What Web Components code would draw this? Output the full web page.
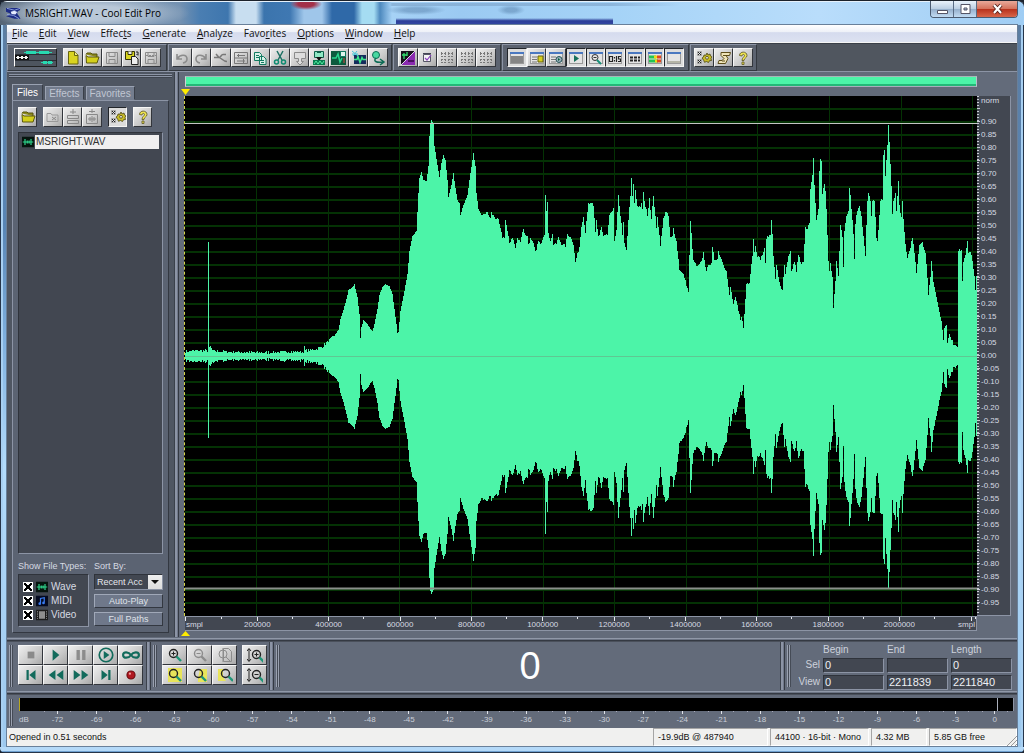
<!DOCTYPE html>
<html lang="en">
<head>
<meta charset="utf-8">
<title>MSRIGHT.WAV - Cool Edit Pro</title>
<style>
  html, body { height: 100%; margin: 0; }
  body {
    --panel: #636b7a; --dark: #4f5662; --well: #424751; --lite: #8c94a5; --edge: #343942;
    --wave: #4cf4a8; --ink: #d6dae2;
    font: 9px/12px "Liberation Sans", Arial, sans-serif; color: var(--ink); background: #1c2430;
  }
</style>
</head>
<body>
<app-window>
  <title-bar slot="title">MSRIGHT.WAV - Cool Edit Pro</title-bar>
  <menu-bar slot="menu"></menu-bar>
  <main-toolbar slot="toolbar"></main-toolbar>
  <file-panel slot="side"></file-panel>
  <wave-view slot="main"></wave-view>
  <transport-row slot="transport"></transport-row>
  <level-meter slot="levels"></level-meter>
  <status-bar slot="status">
    <span>Opened in 0.51 seconds</span>
    <span>-19.9dB @ 487940</span>
    <span>44100 · 16-bit · Mono</span>
    <span>4.32 MB</span>
    <span>5.85 GB free</span>
  </status-bar>
</app-window>

<script>
const define = (name, html, init) => customElements.define(name, class extends HTMLElement {
  connectedCallback() {
    if (this.shadowRoot) return;
    const root = this.attachShadow({ mode: 'open' });
    root.innerHTML = typeof html === 'function' ? html(this) : html;
    if (init) init(root, this);
  }
});

/* ---------- icon library, drawn on a 16 x 16 grid ---------- */
const mag = (c, h) => `<circle cx="6.5" cy="6.5" r="4" fill="none" stroke="${c}" stroke-width="1.4"/><path d="M9.500 9.500l4.500 4.500" stroke="${h}" stroke-width="2.400"/>`;
const boxes = (c) => `<g fill="none" stroke="${c}"><path d="M2 3.500h5M9 3.500h5M2 6.500h5M9 6.500h5M2 9.500h5M9 9.500h5M2 12.500h5M9 12.500h5" stroke-dasharray="2 1"/><path d="M2.500 2v4M6.500 2v4M9.500 2v4M13.500 2v4M2.500 10v4M6.500 10v4M9.500 10v4M13.500 10v4" stroke-dasharray="1 1"/></g>`;
const win = (inner) => `<rect x="1.500" y="2.500" width="13" height="11" fill="#e4e4e4" stroke="#999"/><path d="M1 2h14v2H1z" fill="#4a78c0"/>${inner}`;
const gear = `<path d="M2 2l3 3m0-3L2 5M2 10l3 3m0-3l-3 3" stroke="#222" stroke-width="1"/><path d="M1.500 1.500h4v4h-4zM1.500 9.500h4v4h-4z" fill="none" stroke="#777" stroke-width=".5"/><path d="M11 3l1 2 2-1 .5 2 1.500 1-1 1.500.5 2-2 .2-1 1.800-2-1-2 .8-.8-2L6 8l1.500-1L8 5l2 .2z" fill="#c8bc28" stroke="#4b4510" stroke-width=".8"/><circle cx="11" cy="7.800" r="1.400" fill="#eee" stroke="#4b4510" stroke-width=".8"/>`;
const folder = `<path d="M2 4.500l1-1.500h4l1 1h5v3" fill="#8d8a1c" stroke="#56530c"/><path d="M4 7h11l-2 6H2.500L2 5.500z" fill="#d3cf1c" stroke="#5c590c"/>`;
const floppy = (c) => `<path d="M2.500 2.500h11v11h-11zM5 2.500v4h6v-4M5 13.500v-4h6v4" fill="none" stroke="${c}"/>`;
const ICONS = {
  logo: `<path d="M0 2h15v2.500c-3 .5-4 3-2 5l2.500 4H9L0 11c3-.5 4-1.500 4.500-3L0 6z" fill="#1d2c86"/><path d="M1 2.500l8 2 6-2M1 9l7 1 6 3.500" stroke="#8fa2e0" fill="none"/><path d="M5 6l4-1 3 1.500L10 9 6 8.500z" fill="#e6ecff"/>`,
  fresh: `<path d="M3.500 1.500h6l3.500 3.500v9h-9.500z" fill="#d9d420" stroke="#67640f"/><path d="M9.500 1.500v4H13" fill="#f2f08a" stroke="#67640f"/>`,
  open: folder,
  save: floppy('#8a8a8a'),
  saveas: `<path d="M1.500 1.500h9v8h-9z" fill="#d8d420" stroke="#33320a"/><path d="M4 1.500v3h4v-3" fill="#eee" stroke="#33320a"/><path d="M7.500 6.500h4l2.500 2.500v5.500h-6.500z" fill="#eee" stroke="#222"/><path d="M12 2h2v3m-1.500-1L14 5.500" stroke="#222" fill="none"/>`,
  savesel: floppy('#8a8a8a') + `<path d="M3 5.500h10" stroke="#8a8a8a" stroke-dasharray="2 1"/>`,
  undo: `<path d="M3 4v5h5M3.500 8.500C6 4 13 4 13 9c0 2-1.500 3.500-4 4" fill="none" stroke="#8c8c8c" stroke-width="1.600"/>`,
  redo: `<path d="M13 4v5H8M12.500 8.500C10 4 3 4 3 9c0 2 1.500 3.500 4 4" fill="none" stroke="#8c8c8c" stroke-width="1.600"/>`,
  trim: `<path d="M1 7.500h5c2 0 2-3 4-3h3M6 7.500c2 0 4 4 8 4M3 4l3 3.500" fill="none" stroke="#777" stroke-width="1.500"/>`,
  grid: `<path d="M1.500 2.500h13v11h-13zM1.500 8h13M4 5.500h8M4 11h8" fill="none" stroke="#777"/><path d="M5.500 4v3M10.500 9v4" stroke="#777"/>`,
  copy: `<path d="M2.500 2.500h5l2 2v6h-7zM7.500 6.500h4l2.500 2.500v5.500H7.500z" fill="#d8f0e8" stroke="#117a60"/><path d="M4 5.500h3M4 7.500h3M9 10.500h3M9 12.500h3" stroke="#117a60"/>`,
  cut: `<path d="M5 1l5 9M11 1l-5 9" stroke="#1d6f62" stroke-width="1.500"/><g fill="none" stroke="#0d8a70" stroke-width="1.500"><circle cx="4.500" cy="12" r="2"/><circle cx="11.500" cy="12" r="2"/></g>`,
  paste: `<path d="M2.500 2.500h11v6h-4v3h2l-3.500 3.500-3.500-3.500h2v-3h-4z" fill="#ddd" stroke="#8a8a8a"/>`,
  pastewave: `<path d="M3.500 1.500h9v6h-9z" fill="#8fe8c4" stroke="#0e5f4a"/><path d="M6 1h4v2H6z" fill="#0e5f4a"/><path d="M5 7h6l-3 4z" fill="#111"/><path d="M2 10h12v5H2z" fill="#0a7a50"/><path d="M3 14l2-3 2 3 2-3 2 3 2-3" stroke="#50f0a0" fill="none"/>`,
  mixpaste: `<path d="M0 1h15v14H0z" fill="#0c5a3e"/><path d="M1 8h4l2-4 2 8 2-4" stroke="#26d48c" fill="none" stroke-width="1.500"/><path d="M9.500 1.500h5v5h-5z" fill="#dff5ec" stroke="#117a60"/><path d="M13 8v5" stroke="#d04040"/>`,
  newwave: `<path d="M3 5h12v9H3z" fill="#142c5c"/><path d="M3 9.500h3l1-3 2 6 2-5 1 2h3" stroke="#3ce88a" fill="none" stroke-width="1.500"/><path d="M1 1l6 5M6 1L2 6M1 4h6" stroke="#48c8d8"/>`,
  convert: `<circle cx="6" cy="5" r="3.500" fill="#48d8a0" stroke="#0c6b55"/><path d="M6 8c-3 3 0 5 7 4M10 9l4 3-4 3" fill="none" stroke="#0c6b55" stroke-width="1.500"/>`,
  spectral: `<path d="M1 1h14v14H1z" fill="#16101c"/><path d="M1 15L15 1v14z" fill="#8a2ab0"/><path d="M2 5h5M4 3v6M7 2v4" stroke="#33e070" stroke-width="1.300"/><path d="M1 15L15 1" stroke="#d8d8e8"/><path d="M8 11h6" stroke="#4a1060" stroke-width="2"/>`,
  check: `<path d="M4.500 4.500h7v7h-7z" fill="#f4f4f4" stroke="#556"/><path d="M6 8l2 2 4-5" fill="none" stroke="#8c40c0" stroke-width="1.200"/><path d="M4 3.500h8" stroke="#445"/>`,
  boxes: boxes('#777'),
  w1: win(`<path d="M2 6h12v7H2z" fill="#858585"/>`),
  w2: win(`<path d="M3 7h5M3 9.500h5M3 12h5" stroke="#777"/><path d="M9 6h5v6H9z" fill="#d6d020" stroke="#66600c"/>`),
  w3: win(`<path d="M3 7h5M3 9.500h5M3 12h5" stroke="#777"/><circle cx="11" cy="9.500" r="3" fill="#9ab" stroke="#255"/><path d="M10 8l2 1.500-2 1.500z" fill="#063"/>`),
  w4: win(`<path d="M6 5v7l5-3.500z" fill="#17705a"/>`),
  w5: win(`<circle cx="7" cy="7.500" r="3" fill="none" stroke="#333"/><path d="M9 10l4 4" stroke="#17907a" stroke-width="2"/><path d="M5.500 7.500h3" stroke="#333"/>`),
  w6: win(`<path d="M2.500 6.500h3v5h-3zM7.500 7v1.500M7.500 10v1.500M9.500 6v6M14 6.500h-2.500v2.500h2v2.500h-2.500" fill="none" stroke="#222" stroke-width="1.200"/>`),
  w7: win(`<path d="M3 7.500h10M3 10.500h10" stroke="#222" stroke-width="2" stroke-dasharray="3 1"/>`),
  w8: win(`<path d="M2 5.500h7v3H2zM2 9.500h9v3H2z" fill="#23c552"/><path d="M7 5.500h3v3H7zM8 9.500h2v3H8z" fill="#f1d714"/><path d="M10 5.500h4v3h-4zM10 9.500h4v3h-4z" fill="#e2471c"/>`),
  w9: win(`<path d="M2 11h12v2H2z" fill="#b5b5a8"/>`),
  gear,
  script: `<path d="M5 2.500h9.500l-1 3H10l2 3-2.500 5H2l1-3h3l2-2-3-3z" fill="#efe4b8" stroke="#5c4c18"/><path d="M7 5.500h4M6 11h3" stroke="#5c4c18"/>`,
  help: `<path d="M4.500 5.500C4.500 1 12 1 12 5.500 12 8 9 8 9 10.500H7C7 7.500 9.500 7 9.500 5.500S7 4 7 6zM7 12h2v2.500H7z" fill="#f0e650" stroke="#66602a" stroke-width=".9"/>`,
  closef: `<path d="M2 12.500v-8h4l1 1.500h6v6.500z" fill="none" stroke="#999"/><path d="M7 8l4 3m0-3l-4 3" stroke="#888"/>`,
  insmt: `<path d="M8 0v5M5 3h6M2.500 6.500h11v3h-11zM2.500 11.500h11v3h-11z" fill="none" stroke="#888"/>`,
  inscd: `<path d="M8 0v4M5 2.500h6M2.500 5.500h11v9h-11zM4 10h8M6 8v4M8 7v6M10 8v4" fill="none" stroke="#888"/>`,
  stop: `<path d="M5 5h6v6H5z" fill="#8a8a8a"/>`,
  play: `<path d="M5 3v10l6-5z" fill="#126b5c"/>`,
  pause: `<path d="M4 3.500h3v9H4zM9 3.500h3v9H9z" fill="#8c8c8c"/>`,
  playto: `<circle cx="8" cy="8" r="6" fill="none" stroke="#126b5c" stroke-width="1.500"/><path d="M6 4.500v7l5-3.500z" fill="#126b5c"/>`,
  loop: `<path d="M8 8C6 5 1 4.500 1 8s5 3 7 0 7-3.500 7 0-5 3-7 0z" fill="none" stroke="#126b5c" stroke-width="2"/>`,
  first: `<path d="M4 3.500h2v9H4zM12 3.500v9L6.500 8z" fill="#126b5c"/>`,
  rew: `<path d="M7.500 3.500v9L1.500 8zM14.500 3.500v9L8.500 8z" fill="#126b5c"/>`,
  fwd: `<path d="M1.500 3.500v9l6-4.500zM8.500 3.500v9l6-4.500z" fill="#126b5c"/>`,
  last: `<path d="M10 3.500h2v9h-2zM4 3.500v9L9.500 8z" fill="#126b5c"/>`,
  rec: `<circle cx="8" cy="8" r="3.600" fill="#b01820" stroke="#6b0c10"/><circle cx="7" cy="6.800" r="1" fill="#f0a0a0"/>`,
  zin: mag('#222', '#1d9678') + `<path d="M4.500 6.500h4m-2-2v4" stroke="#222"/>`,
  zout: mag('#8c8c8c', '#8c8c8c') + `<path d="M4.500 6.500h4" stroke="#8c8c8c"/>`,
  zfull: `<path d="M6.500 1.500h5l3 3v10h-8z" fill="none" stroke="#8c8c8c"/><circle cx="6" cy="7" r="4" fill="none" stroke="#8c8c8c"/><path d="M6 1v14M9 10l4 4" stroke="#8c8c8c"/>`,
  zsel: `<path d="M1 1h14v14H1z" fill="#e8e45a"/>` + mag('#222', '#1d9678'),
  zleft: `<path d="M8 2h7v13H6v-4z" fill="#e8e45a"/>` + mag('#222', '#1d9678'),
  zright: `<path d="M1 2h5v8l3 4H1z" fill="#e8e45a"/><g transform="translate(2)">` + mag('#222', '#1d9678') + '</g>',
  vin: `<path d="M2 2v12M0 4l2-2.500L4 4M0 12l2 2.500L4 12" fill="none" stroke="#222"/><g transform="translate(3 1)">` + mag('#222', '#1d9678') + `<path d="M4.500 6.500h4m-2-2v4" stroke="#222"/></g>`,
  vout: `<path d="M2 2v12M0 4l2-2.500L4 4M0 12l2 2.500L4 12" fill="none" stroke="#222"/><g transform="translate(3 1)">` + mag('#222', '#1d9678') + `<path d="M4.500 6.500h4" stroke="#222"/></g>`,
  wavefile: `<path d="M0 1h16v14H0z" fill="#06140e"/><path d="M1 8h14M4 4v8M7 6v4M9.500 6v4M12 4v8" stroke="#2fd48c" stroke-width="1.600"/>`,
  midifile: `<path d="M0 1h16v14H0z" fill="#050a20"/><path d="M6 11V4.500l5-1V10" fill="none" stroke="#3a7cf0" stroke-width="1.600"/><circle cx="5" cy="11.500" r="1.800" fill="#3a7cf0"/><circle cx="10" cy="10.500" r="1.800" fill="#3a7cf0"/>`,
  videofile: `<path d="M0 1h16v14H0z" fill="#1c1c1c"/><path d="M4 3h8v10H4z" fill="#8e8e8e"/><path d="M2 3v10M14 3v10" stroke="#bbb" stroke-dasharray="1.500 1.500"/>`
};
const icon = (n, s = 16) => `<svg viewBox="0 0 16 16" width="${s}" height="${s}" aria-hidden="true">${ICONS[n] || ''}</svg>`;

/* ---------- shared controls ---------- */
define('tool-button', (el) => `
  <style>
    :host { display: flex; flex: 1 1 0; min-width: 0; }
    button { flex: 1; min-width: 0; padding: 0; margin: 0; display: grid; place-items: center; border: 1px solid; overflow: hidden;
      border-color: #f6f6f6 #33363c #33363c #f6f6f6; background: linear-gradient(135deg, #eee, #c9c9c9 60%, #a9a9a9); }
    :host([down]) button { border-color: #22252a #f4f4f4 #f4f4f4 #22252a; background: #dcdcdc; }
    svg { display: block; }
  </style>
  <button type="button" aria-label="${el.getAttribute('label') || el.getAttribute('icon')}">${icon(el.getAttribute('icon'), el.getAttribute('size') || 16)}</button>`);
const tb = (names, down = '', size = 16) => names.split(' ').map((n, i) => `<tool-button icon="${n}" size="${size}" ${down[i] === '1' ? 'down' : ''}></tool-button>`).join('');

define('grip-bar', `
  <style>:host { display: block; flex: none; width: 4px; margin: 2px 0;
    background: linear-gradient(90deg, #9aa1b0 1px, #454b56 1px 2px, #9aa1b0 2px 3px, #454b56 3px); }</style>`);
define('split-bar', `
  <style>:host { display: block; flex: none; width: 5px;
    background: linear-gradient(90deg, #3b414b 1px, #8c94a5 1px 3px, #70788a 3px 4px, #343942 4px); }</style>`);

/* ---------- window ---------- */
define('app-window', `
  <style>
    :host { display: flex; flex-direction: column; box-sizing: border-box; min-height: 100vh; padding: 0 7px 7px;
      border-radius: 7px 7px 5px 5px;
      background: linear-gradient(#3b414a 2px, transparent 2px),
        linear-gradient(0deg, #26354a 1px, #6fa0d0 1px 2px, #b4d9f8 2px 6px, transparent 6px),
        linear-gradient(90deg, #26354a 1px, #a8d0f2 1px 3px, transparent 3px calc(100% - 3px), #a8d0f2 calc(100% - 3px) calc(100% - 1px), #26354a calc(100% - 1px)),
        linear-gradient(#5c7ca0, #5885b5 30%, #7fb0df 45%, #b2dbfb 62%, #9cc8ee); }
    .client { flex: 1; display: flex; flex-direction: column; background: var(--dark); outline: 1px solid #69809a; }
    .mid { flex: 1; display: flex; min-height: 0; border-top: 1px solid var(--lite); background: var(--panel); }
    .rule { height: 5px; background: linear-gradient(var(--panel) 1px, #9098a8 1px 2px, #6c7484 2px 3px, #343942 3px 4px, #4a505b 4px); }
    ::slotted([slot=side]) { flex: none; width: 167px; }
    ::slotted([slot=main]) { flex: 1; min-width: 0; }
  </style>
  <slot name="title"></slot>
  <div class="client">
    <slot name="menu"></slot><slot name="toolbar"></slot>
    <div class="mid"><slot name="side"></slot><split-bar></split-bar><slot name="main"></slot></div>
    <div class="rule"></div>
    <slot name="transport"></slot>
    <div class="rule"></div>
    <slot name="levels"></slot><slot name="status"></slot>
  </div>`);

define('title-bar', `
  <style>
    :host { display: flex; height: 25px; margin: 0 -7px; padding: 0 6px 0 6px; align-items: center; gap: 4px; box-sizing: border-box;
      border-radius: 7px 7px 0 0; overflow: hidden; border-top: 1px solid #1c222b; color: #000;
      font: 10px/16px "Open Sans", "Noto Sans", sans-serif;
      background:
        linear-gradient(#e6f1fb 1px, transparent 1px),
        linear-gradient(#2c3e9800, #2c3e98 40%, #3448a4) 396px 17px / 217px 7px no-repeat,
        radial-gradient(ellipse 100px 18px at 90px 12px, #b9c8d8 40%, #b9c8d800),
        radial-gradient(ellipse 30px 5px at 416px 9px, #5c86b088 40%, #5c86b000),
        radial-gradient(ellipse 14px 5px at 511px 9px, #5c86b088 40%, #5c86b000),
        linear-gradient(90deg, #7fa6cc00 390px, #7fa6ccaa 392px 610px, #7fa6cc00 680px) 0 2px / 100% 3px no-repeat,
        radial-gradient(ellipse 16px 6px at 306px 3px, #a33049 50%, #a3304900),
        linear-gradient(90deg, #556475, #7e93ab 60px, #7391b1 180px, #4a7eb2 200px, #3e76ae 228px, #c8def0 236px 256px, #3b74ad 264px, #3f78b2 290px, #9fc6ea 304px 322px, #2f69a8 332px, #2f69a8 354px, #a5dcf2 362px 374px, #4d89be 380px, #a6d2f6 392px, #9bcaf2 45%, #a5d3f7 60%, #b9ddfb 80%, #9fcdf4); }
    .t { flex: 1; }
    .b { display: flex; align-self: flex-start; height: 16px; border: 1px solid #4a5a70; border-top: 0; border-radius: 0 0 4px 4px; overflow: hidden; }
    button { width: 23px; padding: 0; border: 0; border-right: 1px solid #5a6c84; display: grid; place-items: center;
      background: linear-gradient(#e9f2fb, #b9cde2 50%, #94aecb 50%, #c2dbf2); }
    button:last-child { width: 40px; border-right: 0; background: linear-gradient(#e9a99a, #d4705a 50%, #b7301b 50%, #d8664a); }
  </style>
  ${icon('logo', 15)}
  <span class="t"><slot></slot></span>
  <div class="b">
    <button type="button" aria-label="Minimize"><svg width="13" height="12"><path d="M1.500 7.500h10v3h-10z" fill="#fff" stroke="#556"/></svg></button>
    <button type="button" aria-label="Maximize"><svg width="13" height="12"><path d="M2 1.500h9v9H2zM5 5h3v2H5z" fill="#fff" fill-rule="evenodd" stroke="#556"/></svg></button>
    <button type="button" aria-label="Close"><svg width="13" height="12"><path d="M3 2l7 8M10 2l-7 8" stroke="#57221c" stroke-width="4"/><path d="M3 2l7 8M10 2l-7 8" stroke="#fff" stroke-width="2.200"/></svg></button>
  </div>`);

define('menu-bar', () => `
  <style>
    :host { display: block; color: #111; background: linear-gradient(#fff, #eef1f8 40%, #d5dbee 45%, #dde2f1); border-bottom: 1px solid #f5f5f5; }
    nav { display: flex; gap: 11px; height: 17px; padding-left: 5px; }
    button { all: unset; font: 10px/17px "Open Sans", "Noto Sans", sans-serif; }
  </style>
  <nav>${['_File', '_Edit', '_View', 'Effec_ts', '_Generate', '_Analyze', 'Favo_rites', '_Options', '_Window', '_Help']
    .map(s => `<button type="button">${s.replace(/_(.)/, '<u>$1</u>')}</button>`).join('')}</nav>`);

define('main-toolbar', () => `
  <style>
    :host { display: flex; height: 27px; background: #50565f; border-top: 1px solid #3a3f48; }
    .g { box-sizing: border-box; display: flex; padding: 3px; border: 1px solid; border-color: var(--lite) #33383f #33383f var(--lite); background: #5c6370; margin-right: 1px; }
    .logo { width: 43px; margin: 0 6px 0 3px; box-sizing: border-box; border: 1px solid; border-color: #fff #222 #222 #fff; background: #4e555f; padding: 0; display: block; }
    .logo svg { display: block; }
    .five { display: flex; width: 98px; }
    .a { width: 160px; } .b { width: 224px; } .c { width: 108px; padding-left: 4px; padding-right: 4px; } .d { width: 187px; padding-left: 4px; padding-right: 4px; } .e { width: 67px; }
  </style>
  <div class="g a">
    <button type="button" class="logo" aria-label="Multitrack view"><svg width="41" height="17"><path d="M0 5.500h41M0 11.500h41" stroke="#2a2e35"/><path d="M9 3.500h28" stroke="#28d8b0"/><path d="M11 3.500h10M24 3.500h10" stroke="#28d8b0" stroke-width="3"/><path d="M0 8.500h14" stroke="#111" stroke-width="5"/><path d="M1 8.500h12" stroke="#f4f4f4"/><path d="M2 8.500h11" stroke="#f4f4f4" stroke-width="3" stroke-dasharray="2 2"/><path d="M26 13.500h12" stroke="#28d8b0"/><path d="M28 13.500h9" stroke="#28d8b0" stroke-width="3" stroke-dasharray="4 1"/></svg></button>
    <div class="five">${tb('fresh open save saveas savesel')}</div>
  </div>
  <div class="g b">${tb('undo redo trim grid copy cut paste pastewave mixpaste newwave convert')}</div>
  <div class="g c">${tb('spectral check boxes boxes boxes')}</div>
  <div class="g d">${tb('w1 w2 w3 w4 w5 w6 w7 w8 w9', '100111111')}</div>
  <div class="g e">${tb('gear script help')}</div>`);

/* ---------- organizer panel ---------- */
define('file-panel', () => `
  <style>
    :host { display: flex; flex-direction: column; box-sizing: border-box; padding: 2px 5px 4px 5px; background: var(--dark); }
    .grip { height: 4px; margin: 0 -3px 6px; background: linear-gradient(#8c94a5 1px, #3f454f 1px 2px, #8c94a5 2px 3px, #3f454f 3px); }
    .tabs { display: flex; gap: 2px; align-items: flex-end; height: 16px; }
    .tabs button { margin: 0; padding: 0 3px; height: 14px; font: 10px/13px "Liberation Sans", sans-serif; color: #c0c6d2; background: #747d8e; border: 1px solid; border-color: #9aa2b2 #3a3f48 transparent #9aa2b2; white-space: nowrap; }
    .tabs button[aria-selected=true] { height: 17px; padding: 0 4px; color: #fff; background: #5b6372; margin-bottom: -1px; }
    .page { flex: 1; display: flex; flex-direction: column; padding: 6px 5px 5px; border: 1px solid; border-color: var(--lite) #333841 #333841 var(--lite); background: #5b6372; min-height: 0; }
    .bar { display: flex; height: 20px; gap: 6px; margin-bottom: 5px; }
    .bar div { display: flex; width: 19px; } .bar .w { width: 59px; }
    .list { flex: 1; margin: 0; padding: 2px 3px; list-style: none; background: var(--well); border: 1px solid; border-color: #2f333b var(--lite) var(--lite) #2f333b; }
    .list li { display: flex; align-items: center; gap: 1px; font-size: 10px; }
    .list span { flex: 1; background: #f0eff0; color: #333; line-height: 14px; padding-left: 1px; }
    .opts { display: flex; gap: 5px; margin-top: 6px; }
    .types { width: 71px; } .sort { flex: 1; display: flex; flex-direction: column; gap: 4px; }
    .cap { white-space: nowrap; height: 14px; line-height: 12px; font-size: 9px; }
    .box { box-sizing: border-box; height: 53px; padding: 0 4px; background: var(--well); border: 1px solid; border-color: #2f333b var(--lite) var(--lite) #2f333b; display: flex; flex-direction: column; justify-content: center; gap: 1px; }
    .box label { display: flex; align-items: center; gap: 3px; font-size: 10px; height: 13px; }
    input { appearance: none; width: 10px; height: 10px; margin: 0; background: linear-gradient(45deg, transparent 43%, #000 43% 57%, transparent 57%), linear-gradient(-45deg, transparent 43%, #000 43% 57%, transparent 57%), #fff; border: 1px solid #fff; box-sizing: border-box; }
    .sort .cap { margin-bottom: -4px; }
    .sel { display: flex; height: 16px; box-sizing: border-box; border: 1px solid; border-color: #2f333b var(--lite) var(--lite) #2f333b; background: var(--well); }
    select { appearance: none; flex: 1; min-width: 0; margin: 0; padding: 0 14px 0 2px; border: 0; border-radius: 0; color: #e6e9ee; font: 9px/14px "Liberation Sans", sans-serif; text-overflow: clip;
      background: linear-gradient(#eee, #ddd) right / 14px 14px no-repeat, var(--well); }
    .arrow { width: 8px; height: 4px; margin: 5px 3px 0 -11px; background: #111; clip-path: polygon(0 0, 100% 0, 50% 100%); z-index: 1; pointer-events: none; }
    .sort > button { height: 14px; margin: 0; padding: 0; font: 9px/12px "Liberation Sans", sans-serif; color: #dfe2e8; background: #6f788a; border: 1px solid; border-color: #a0a8b8 #333841 #333841 #a0a8b8; }
  </style>
  <div class="grip"></div>
  <div class="tabs" role="tablist"><button role="tab" aria-selected="true">Files</button><button role="tab">Effects</button><button role="tab">Favorites</button></div>
  <div class="page">
    <div class="bar"><div>${tb('open')}</div><div class="w">${tb('closef insmt inscd')}</div><div>${tb('gear', '1')}</div><div>${tb('help')}</div></div>
    <ul class="list"><li>${icon('wavefile', 12)}<span>MSRIGHT.WAV</span></li></ul>
    <div class="opts">
      <div class="types"><div class="cap">Show File Types:</div>
        <div class="box">
          <label><input type="checkbox" checked>${icon('wavefile', 12)}Wave</label>
          <label><input type="checkbox" checked>${icon('midifile', 12)}MIDI</label>
          <label><input type="checkbox" checked>${icon('videofile', 12)}Video</label>
        </div></div>
      <div class="sort"><label class="cap" for="s">Sort By:</label>
        <div class="sel"><select id="s"><option>Recent Acc</option></select><i class="arrow"></i></div>
        <button type="button">Auto-Play</button><button type="button">Full Paths</button></div>
    </div>
  </div>`);

/* ---------- waveform ---------- */
/* Peak envelope: sample column, amplitude (259 = full scale). */
const ENV = `0 4 8 5 22 5 25 9 27 5 40 4 75 3 100 4 118 4 119 8 120 5 128 6 137 9 142 14 148 19 153 26 155 37 158 46 161 57 163 66 167 69 169 72 170 67 172 59 174 42 175 18 176 29 178 36 182 32 185 27 187 25 189 32 192 47 194 61 197 69 200 72 204 70 207 62 209 47 211 32 212 23 213 24 215 45 218 60 222 82 224 105 227 120 231 125 233 162 234 177 236 183 238 175 241 174 243 189 244 219 245 232 246 235 248 231 249 209 252 190 254 178 256 192 258 200 260 195 262 175 263 158 266 170 268 182 270 167 272 155 274 152 275 140 278 150 282 160 284 175 287 195 288 202 290 189 291 162 293 146 297 139 301 143 305 137 306 142 308 139 313 135 317 119 319 119 320 135 322 124 324 113 327 119 330 108 332 117 335 115 338 128 339 122 342 120 343 112 345 117 348 112 350 104 353 115 355 111 358 120 359 122 360 161 361 145 362 153 363 122 365 116 367 121 368 112 371 112 373 118 376 112 380 110 382 122 386 118 388 112 390 94 392 102 394 109 396 130 398 138 400 124 402 142 403 151 407 151 408 149 410 124 411 135 413 120 414 121 416 129 418 119 422 121 424 139 428 147 429 114 431 125 433 159 435 140 437 122 438 132 439 112 441 105 443 135 445 159 446 176 447 160 448 170 449 152 450 165 452 149 455 147 456 152 457 145 458 162 460 149 462 140 464 157 466 135 468 160 471 127 472 139 475 111 478 136 480 144 483 139 485 118 487 119 488 128 491 115 494 87 499 79 503 64 504 100 505 134 506 122 508 95 512 89 516 94 518 103 521 84 523 92 526 92 527 108 529 97 532 97 533 105 536 97 541 85 544 60 545 69 548 52 550 58 552 50 553 45 555 37 556 40 558 28 559 42 561 72 564 74 566 92 567 100 568 118 569 104 570 111 572 100 575 97 578 104 579 107 580 92 581 118 584 121 585 121 586 136 587 123 588 99 590 78 591 90 594 74 597 65 599 90 600 82 603 99 605 104 606 84 609 95 611 85 613 101 616 91 618 95 620 130 622 127 624 132 625 165 627 179 628 198 629 170 631 135 633 145 634 184 635 196 636 194 637 162 639 170 640 165 641 147 643 95 644 84 645 93 647 79 648 48 650 75 651 96 653 81 654 105 655 130 657 119 658 89 659 125 661 140 663 145 664 167 665 160 666 147 668 122 669 97 670 132 672 145 674 150 676 139 678 120 680 99 681 129 682 154 683 161 685 155 686 139 687 153 689 154 691 119 692 114 693 127 695 155 697 154 698 199 699 205 700 180 702 209 703 231 704 212 706 169 707 140 708 155 710 161 711 144 713 173 714 149 716 137 717 153 718 135 720 112 722 98 724 105 727 118 729 104 731 82 734 112 737 114 740 102 742 79 743 62 745 79 746 96 748 75 750 64 753 49 756 34 758 16 759 27 761 31 762 13 764 23 766 17 768 12 772 10 773 106 776 106 777 74 778 95 780 100 782 114 783 104 785 105 787 95 789 80 790 65 791 79 792 79`.split(' ').map(Number);

function wavePath() {
  let seed = 7;
  const rnd = () => (seed = (seed * 16807) % 2147483647) / 2147483647;
  let top = 'M0 259', bottom = '';
  for (let x = 0, i = 0; x < 792; x++) {
    while (i < ENV.length - 4 && ENV[i + 2] <= x) i += 2;
    const t = (x - ENV[i]) / (ENV[i + 2] - ENV[i]);
    const a = ENV[i] === x ? ENV[i + 1] : ENV[i + 1] + (ENV[i + 3] - ENV[i + 1]) * Math.min(1, t);
    const j = x < 150 ? (rnd() - 0.4) * 3 : x < 296 ? 0 : (rnd() - 0.5) * 3;
    const up = Math.round(259 - a - j), dn = Math.round(259 + a * 1.01 + j);
    top += `V${up}H${x + 1}`;
    bottom = `V${dn}H${x}` + bottom;
  }
  return top + bottom + 'Z';
}

define('wave-view', () => {
  const rows = [];
  for (let v = 95; v >= -95; v -= 5) rows.push(`<span>${v === 95 ? '' : (v / 100).toFixed(2)}</span>`);
  let grid = '';
  for (let i = 1; i < 40; i++) grid += `M0 ${i * 12.95}H792`;
  let cols = '';
  for (let i = 1; i < 12; i++) cols += `M${i * 71.6} 0V518`;
  const ticks = [];
  for (let i = 1; i <= 10; i++) ticks.push(`<span class="c">${i * 200000}</span>`);
  return `
  <style>
    :host { display: grid; grid-template: 4px 11px 9px 1fr 15px 6px / 1fr 34px; box-sizing: border-box; padding: 0 6px; background: var(--panel); }
    .range { grid-area: 2 / 1; border: 1px solid; border-color: #a7b6b8 #b8bfca #a7afbb #d0d0d0; background: linear-gradient(var(--wave) 7px, #24b878 7px); }
    .m { width: 9px; height: 6px; margin-left: -4px; background: #ffec00; }
    .top { grid-area: 3 / 1; align-self: end; margin-bottom: 1px; clip-path: polygon(0 0, 100% 0, 50% 100%); }
    .bot { grid-area: 6 / 1; height: 5px; clip-path: polygon(50% 0, 100% 100%, 0 100%); }
    .plot { grid-area: 4 / 1; min-height: 0; background: #000; position: relative; border-left: 1px dashed #d8d84a; margin-left: -1px; }
    .plot svg { position: absolute; inset: 0; width: 100%; height: 100%; }
    .y { grid-area: 4 / 2; display: flex; flex-direction: column; background:
        repeating-linear-gradient(#c8ccd4 0 1px, transparent 1px 3px) 0 0 / 2px 100% no-repeat, var(--well);
      border-right: 1px solid var(--lite); border-bottom: 1px solid var(--lite); font-size: 8px; }
    .y span { flex: 1 1 0; min-height: 0; display: flex; align-items: center; gap: 1px; line-height: 9px; }
    .y span::before { content: ""; width: 3px; height: 1px; background: #c8ccd4; }
    .y .n { flex: 0 0 6px; align-items: flex-start; padding-left: 4px; }
    .y .n::before { display: none; }
    .y .z { flex: 0 0 6px; } .y .z::before { display: none; }
    .x { grid-area: 5 / 1; display: flex; border: solid var(--lite); border-width: 1px 1px 1px 0; background: var(--well); font-size: 8px; line-height: 9px; }
    .x span { flex: 200000 1 0; min-width: 0; text-align: center; padding-top: 3px;
      background: linear-gradient(#e8eaee, #e8eaee) 50% 0 / 1px 4px no-repeat, linear-gradient(#e8eaee, #e8eaee) 100% 0 / 1px 2px no-repeat; }
    .x .s { flex-grow: 100000; text-align: left; padding-left: 1px; background-position: 0 0, 100% 0; }
    .x .e { flex-grow: 111840; text-align: right; padding-right: 1px; background-position: 90% 0, 100% 0; }
  </style>
  <div class="range"></div><div class="m top"></div>
  <div class="plot"><svg viewBox="0 0 792 518" preserveAspectRatio="none" role="img" aria-label="Waveform">
    <path d="${grid}${cols}" stroke="#043204" fill="none" shape-rendering="crispEdges"/>
    <path d="${wavePath()}M23 145h1v196h-1zM360 259h1v177h-1z" fill="#4cf4a8" shape-rendering="crispEdges"/>
    <path d="M0 259.500H792" stroke="#5fc793"/>
    <path d="M0 27.500H792" stroke="#c4c4c4"/><path d="M0 490.500H792" stroke="#8a8f8a" stroke-width="2"/>
  </svg></div>
  <div class="y"><span class="n">norm</span>${rows.join('')}<span class="z"></span></div>
  <div class="x"><span class="s">smpl</span>${ticks.join('')}<span class="e">smpl</span></div>
  <div class="m bot"></div>`;
});

/* ---------- transport, zoom, time and selection ---------- */
define('transport-row', () => `
  <style>
    :host { display: flex; height: 48px; background: var(--panel); }
    .p { display: flex; box-sizing: border-box; gap: 5px; padding: 3px 2px 3px 2px; }
    grip-bar { margin: 0; }
    .k { display: grid; grid-auto-rows: 20px; grid-template-columns: repeat(var(--n), 25px); }
    .gap { margin-left: 1px; }
    .time { flex: 1; display: flex; padding: 3px 0 3px 2px; }
    output { flex: 1; text-align: center; color: #fff; font-size: 38px; line-height: 42px; }
    .f { display: grid; grid-template: 13px 16px 16px / 26px repeat(3, 61px); column-gap: 3px; row-gap: 1px; padding: 1px 5px 0 1px; align-items: center; font-size: 10px; line-height: 12px; }
    .f span { color: #cdd2dc; } .f .r { text-align: right; }
    input { box-sizing: border-box; width: 100%; height: 15px; margin: 0; padding: 0 0 0 1px; border: 1px solid; border-color: #2f333b var(--lite) var(--lite) #2f333b; background: var(--well); color: #eef0f4; font: 11px/13px "Liberation Sans", sans-serif; border-radius: 0; }
  </style>
  <div class="p"><grip-bar></grip-bar><div class="k" style="--n:5">${tb('stop play pause playto loop first rew fwd last rec', '', 18)}</div></div>
  <split-bar class="gap"></split-bar>
  <div class="p"><grip-bar></grip-bar><div class="k" style="--n:3">${tb('zin zout zfull zsel zleft zright')}</div><div class="k" style="--n:1">${tb('vin vout')}</div></div>
  <split-bar></split-bar>
  <div class="time"><grip-bar></grip-bar><output>0</output></div>
  <split-bar></split-bar>
  <div class="p"><grip-bar></grip-bar></div>
  <div class="f"><span></span><span>Begin</span><span>End</span><span>Length</span>
    <span class="r">Sel</span><input aria-label="Selection begin" value="0"><input aria-label="Selection end"><input aria-label="Selection length" value="0">
    <span class="r">View</span><input aria-label="View begin" value="0"><input aria-label="View end" value="2211839"><input aria-label="View length" value="2211840"></div>`);

define('level-meter', () => {
  const cells = [];
  for (let v = -72; v <= 0; v += 3) cells.push(`<span>${v}</span>`);
  return `
  <style>
    :host { display: flex; gap: 6px; height: 33px; box-sizing: border-box; padding: 2px 3px 0 2px; background: var(--panel); }
    .m { flex: 1; min-width: 0; }
    .bar { height: 13px; margin-top: 1px; box-sizing: border-box; border-left: 1px solid #b8a820; border-right: 1px solid var(--lite); background: linear-gradient(#aab0bc, #aab0bc) calc(100% - 15px) 0 / 1px 100% no-repeat, #000; }
    .s { display: flex; font-size: 8px; line-height: 9px; }
    .s span { flex: 1 1 0; text-align: center; padding-top: 4px; color: #c9ced8;
      background: linear-gradient(#dfe2e8, #dfe2e8) 50% 0 / 1px 3px no-repeat, linear-gradient(#aab, #aab) 17% 0 / 1px 1px no-repeat, linear-gradient(#aab, #aab) 83% 0 / 1px 1px no-repeat; }
    .s .d { flex: 0 0 19px; text-align: left; background: none; }
  </style>
  <grip-bar></grip-bar><div class="m"><div class="bar"></div><div class="s"><span class="d">dB</span>${cells.join('')}</div></div>`;
});

define('status-bar', `
  <style>
    :host { display: flex; gap: 2px; height: 18px; position: relative; background: #f0f0ef; color: #111; font-size: 9px; line-height: 17px; }
    ::slotted(span) { box-sizing: border-box; border: 1px solid; border-color: #a5a5a5 #fff #fff #a5a5a5; padding-left: 4px; width: 115px; white-space: nowrap; }
    ::slotted(span:first-child) { flex: 1; border-color: transparent; padding-left: 1px; }
    ::slotted(span:nth-child(3)) { width: 99px; } ::slotted(span:nth-child(4)) { width: 56px; } ::slotted(span:nth-child(5)) { width: 88px; }
    svg { position: absolute; right: 0; bottom: 0; }
  </style>
  <slot></slot><svg width="11" height="11"><path d="M1 11L11 1M5 11l6-6M9 11l2-2" stroke="#999"/></svg>`);
</script>
</body>
</html>
